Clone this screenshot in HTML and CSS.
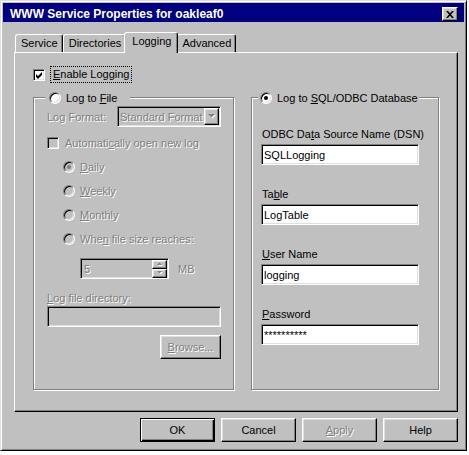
FILE: index.html
```html
<!DOCTYPE html>
<html lang="en">
<head>
  <meta charset="UTF-8">
  <title>WWW Service Properties for oakleaf0</title>
  <link rel="stylesheet" href="styles.css">
</head>
<body>

  <div class="window">
    <div class="titlebar">
      <span class="title">WWW Service Properties for oakleaf0</span>
      <button class="close raised" aria-label="Close">
        <svg width="8" height="7" viewBox="0 0 8 7"><path d="M0 0h2l2 2.3L6 0h2L5 3.5 8 7H6L4 4.7 2 7H0l3-3.5z" fill="#000"/></svg>
      </button>
    </div>

    <div class="content">
      <div class="tabs">
        <div class="tab">Service</div>
        <div class="tab">Directories</div>
        <div class="tab active">Logging</div>
        <div class="tab">Advanced</div>
      </div>

      <div class="panel">
        <label class="enable">
          <span class="checkbox">
            <svg width="7" height="7" viewBox="0 0 7 7"><polygon points="0,2 2,4 6,0 6,3 2,7 0,5" fill="#000"/></svg>
          </span>
          <span class="focus"><u>E</u>nable Logging</span>
        </label>

        <div class="groups">
          <!-- log to file: everything inside is greyed out -->
          <fieldset class="group group-file">
            <legend><span class="radio"></span><span>Log to <u>F</u>ile</span></legend>

            <div class="fmt-row">
              <span class="disabled">Log Format:</span>
              <div class="combo sunken">
                <span class="disabled">Standard Format</span>
                <span class="combo-btn raised">
                  <svg width="8" height="5" viewBox="0 0 8 5"><path d="M1 1h7L4.5 4.5z" fill="#fff"/><path d="M0 0h7L3.5 3.5z" fill="#808080"/></svg>
                </span>
              </div>
            </div>

            <div class="row auto">
              <span class="checkbox off"></span>
              <span class="disabled">Automati<u>c</u>ally open new log</span>
            </div>

            <div class="options">
              <div class="row"><span class="radio off dot"></span><span class="disabled"><u>D</u>aily</span></div>
              <div class="row"><span class="radio off"></span><span class="disabled"><u>W</u>eekly</span></div>
              <div class="row"><span class="radio off"></span><span class="disabled"><u>M</u>onthly</span></div>
              <div class="row"><span class="radio off"></span><span class="disabled">Whe<u>n</u> file size reaches:</span></div>
            </div>

            <div class="spin-row">
              <div class="spin sunken">
                <span class="disabled">5</span>
                <span class="spin-btns">
                  <span class="spin-btn raised"><svg width="6" height="4" viewBox="0 0 6 4"><path d="M1 4h5L3.5 1.5z" fill="#fff"/><path d="M0 3h5L2.5 0.5z" fill="#808080"/></svg></span>
                  <span class="spin-btn raised"><svg width="6" height="4" viewBox="0 0 6 4"><path d="M1 1h5L3.5 3.5z" fill="#fff"/><path d="M0 0h5L2.5 2.5z" fill="#808080"/></svg></span>
                </span>
              </div>
              <span class="disabled mb">MB</span>
            </div>

            <div class="dir-label disabled"><u>L</u>og file directory:</div>
            <input class="field" type="text" disabled>
            <button class="btn browse" disabled><span class="disabled"><u>B</u>rowse...</span></button>
          </fieldset>

          <fieldset class="group group-sql">
            <legend><span class="radio on"></span><span>Log to <u>S</u>QL/ODBC Database</span></legend>

            <div class="entry">
              <label>ODBC Da<u>t</u>a Source Name (DSN)</label>
              <input class="field" type="text" value="SQLLogging">
            </div>
            <div class="entry">
              <label>Ta<u>b</u>le</label>
              <input class="field" type="text" value="LogTable">
            </div>
            <div class="entry">
              <label><u>U</u>ser Name</label>
              <input class="field" type="text" value="logging">
            </div>
            <div class="entry">
              <label><u>P</u>assword</label>
              <input class="field" type="text" value="**********">
            </div>
          </fieldset>
        </div>
      </div>

      <div class="buttons">
        <button class="btn default">OK</button>
        <button class="btn">Cancel</button>
        <button class="btn" disabled><span class="disabled"><u>A</u>pply</span></button>
        <button class="btn">Help</button>
      </div>
    </div>
  </div>

</body>
</html>
```

FILE: styles.css
```css
:root {
  --face: #c0c0c0;
  --light: #dfdfdf;
  --shadow: #808080;
  --navy: #000080;
}

* {
  box-sizing: border-box;
}

body {
  margin: 0;
  background: #fff;
  color: #000;
  font-family: "Liberation Sans", Arial, sans-serif;
  font-size: 11px;
}

u {
  text-underline-offset: 1px;
}

/* bevels */
.raised {
  background: var(--face);
  border: 1px solid;
  border-color: #fff #000 #000 #fff;
  box-shadow: inset -1px -1px var(--shadow), inset 1px 1px var(--light);
}

.sunken {
  border: 1px solid;
  border-color: var(--shadow) #fff #fff var(--shadow);
  box-shadow: inset 1px 1px #000, inset -1px -1px var(--light);
}

.disabled {
  color: var(--shadow);
  text-shadow: 1px 1px 0 #fff;
}

/* window frame */
.window {
  width: 467px;
  height: 451px;
  background: var(--face);
  border: 1px solid;
  border-color: var(--light) #000 #000 var(--light);
  box-shadow: inset 1px 1px #fff, inset -1px -1px var(--shadow);
  padding: 2px;
}

.titlebar {
  height: 19px;
  background: var(--navy);
  display: flex;
  justify-content: space-between;
  align-items: flex-start;
  padding: 0 6px 0 7px;
}

.title {
  color: #fff;
  font: bold 12px "Liberation Sans", Arial, sans-serif;
  line-height: 15px;
  padding-top: 4px;
}

.close {
  width: 16px;
  height: 14px;
  margin-top: 4px;
  padding: 0;
  display: flex;
  align-items: center;
  justify-content: center;
}

.content {
  padding: 10px 6px 0 11px;
}

/* tabs */
.tabs {
  display: flex;
  align-items: flex-end;
  height: 20px;
  padding-left: 1px;
}

.tab {
  height: 18px;
  padding: 0 4px 0 5px;
  line-height: 16px;
  border: 1px solid;
  border-bottom: 0;
  border-color: #fff #000 #000 #fff;
  border-radius: 3px 3px 0 0;
  box-shadow: inset -1px 0 var(--shadow);
  background: var(--face);
}

.tab.active {
  position: relative;
  z-index: 1;
  height: 21px;
  margin: 0 -2px -1px;
  padding: 0 6px 0 7px;
  line-height: 17px;
}

.panel {
  height: 360px;
  border: 1px solid;
  border-color: #fff #000 #000 #fff;
  box-shadow: inset -1px -1px var(--shadow);
  padding: 14px 18px 0;
}

/* checkboxes & radios */
.checkbox {
  flex: none;
  width: 12px;
  height: 12px;
  background: #fff;
  border: 1px solid;
  border-color: var(--shadow) #fff #fff var(--shadow);
  box-shadow: inset 1px 1px #000, inset -1px -1px var(--light);
  display: flex;
  align-items: center;
  justify-content: center;
  padding: 1px 0 0 1px;
}

.checkbox.off {
  background: var(--face);
}

.radio {
  flex: none;
  width: 12px;
  height: 12px;
  border-radius: 50%;
  background: #fff;
  border: 1px solid;
  border-color: var(--shadow) #fff #fff var(--shadow);
  box-shadow: inset 1px 1px #000, inset -1px -1px var(--light);
  display: flex;
  align-items: center;
  justify-content: center;
  margin-right: 5px;
}

.radio.off {
  background: var(--face);
}

.radio.on::after,
.radio.dot::after {
  content: "";
  width: 4px;
  height: 4px;
  border-radius: 50%;
  background: #000;
}

.radio.dot::after {
  background: var(--shadow);
}

.enable {
  display: flex;
  align-items: center;
  height: 15px;
}

.enable .checkbox {
  margin-right: 6px;
}

.focus {
  outline: 1px dotted #000;
  padding: 0 2px;
  line-height: 15px;
}

/* group boxes */
.groups {
  display: grid;
  grid-template-columns: 201px 188px;
  column-gap: 17px;
  margin-top: 8px;
}

.group {
  margin: 0;
  min-width: 0;
  height: 300px;
  border: 1px solid var(--shadow);
  box-shadow: 1px 1px #fff, inset 1px 1px #fff;
}

.group legend {
  display: flex;
  align-items: center;
  height: 15px;
  background: var(--face);
  white-space: nowrap;
}

.group-file {
  padding: 0 12px 0 13px;
}

.group-file legend {
  width: 85px;
  margin-left: -2px;
  padding: 0 0 0 4px;
}

.group-sql {
  padding: 0 0 0 9px;
}

.group-sql legend {
  width: 161px;
  margin-left: -3px;
  padding: 0 0 0 2px;
}

.fmt-row {
  display: flex;
  justify-content: space-between;
  align-items: center;
  height: 21px;
  margin-top: 1px;
}

.combo {
  width: 104px;
  height: 21px;
  padding: 1px;
  display: flex;
  align-items: center;
  background: var(--face);
}

.combo > .disabled {
  padding-left: 1px;
  white-space: nowrap;
}

.combo-btn {
  margin-left: auto;
  flex: none;
  width: 15px;
  height: 17px;
  display: flex;
  align-items: center;
  justify-content: center;
}

.row {
  display: flex;
  align-items: center;
  height: 15px;
  margin-top: 9px;
}

.auto {
  margin-top: 8px;
}

.auto .checkbox {
  margin-right: 6px;
}

.options {
  padding-left: 16px;
}

.spin-row {
  display: flex;
  align-items: center;
  margin-top: 12px;
  padding-left: 33px;
}

.spin {
  width: 89px;
  height: 21px;
  padding: 1px;
  display: flex;
  align-items: center;
  background: var(--face);
}

.spin > .disabled {
  padding-left: 2px;
}

.spin-btns {
  margin-left: auto;
  display: flex;
  flex-direction: column;
}

.spin-btn {
  width: 15px;
  height: 9px;
  display: flex;
  align-items: center;
  justify-content: center;
}

.mb {
  margin-left: 9px;
}

.dir-label {
  margin-top: 12px;
  line-height: 15px;
}

/* text boxes */
.field {
  display: block;
  height: 21px;
  padding: 0 2px;
  font: inherit;
  color: #000;
  background: #fff;
  border: 1px solid;
  border-color: var(--shadow) #fff #fff var(--shadow);
  box-shadow: inset 1px 1px #000, inset -1px -1px var(--light);
  outline: none;
}

.field:disabled {
  background: var(--face);
}

.group-file .field {
  width: 100%;
}

.group-sql .field {
  width: 158px;
}

.entry {
  margin-top: 22px;
}

.entry label {
  display: block;
  line-height: 15px;
  padding-left: 1px;
  margin-bottom: 2px;
}

/* push buttons */
.btn {
  display: block;
  width: 75px;
  height: 24px;
  padding: 0;
  font: inherit;
  color: #000;
  background: var(--face);
  border: 1px solid;
  border-color: #fff #000 #000 #fff;
  box-shadow: inset -1px -1px var(--shadow), inset 1px 1px var(--light);
}

.btn.default {
  border-color: #000;
  box-shadow: inset 1px 1px #fff, inset -1px -1px #000, inset -2px -2px var(--shadow);
}

.browse {
  width: 61px;
  margin: 8px 0 0 auto;
}

.buttons {
  display: flex;
  justify-content: flex-end;
  gap: 6px;
  margin-top: 6px;
}
```
